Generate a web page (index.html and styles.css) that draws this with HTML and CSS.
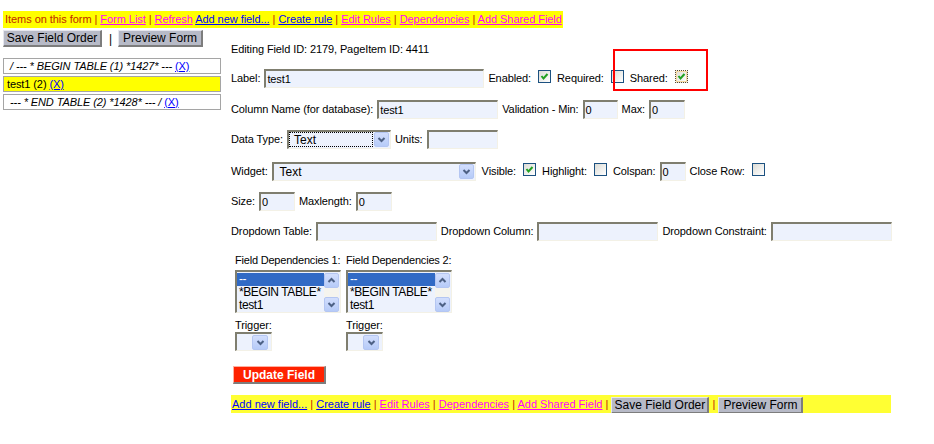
FILE: index.html
```html
<!DOCTYPE html>
<html>
<head>
<meta charset="utf-8">
<title>Edit Field</title>
<link rel="stylesheet" href="styles.css">
</head>
<body>
<div class="page">
  <div class="topbar"><span class="note">Items on this form</span> <span class="sep">|</span> <a class="lnk pink" href="#">Form List</a> <span class="sep">|</span> <a class="lnk pink" href="#">Refresh</a> <a class="lnk blue" href="#">Add new field...</a> <span class="sep">|</span> <a class="lnk blue" href="#">Create rule</a> <span class="sep">|</span> <a class="lnk pink" href="#">Edit Rules</a> <span class="sep">|</span> <a class="lnk pink" href="#">Dependencies</a> <span class="sep">|</span> <a class="lnk pink" href="#">Add Shared Field</a></div>
  <div class="main">
    <div class="left">
      <div class="btnrow"><span class="btn btn-save">Save Field Order</span><span class="pipe">|</span><span class="btn btn-prev">Preview Form</span></div>
      <div class="items">
        <div class="item tbl"><i>/ --- * BEGIN TABLE (1) *1427* --- </i><a class="lnk blue" href="#">(X)</a></div>
        <div class="item cur">test1 (2) <a class="lnk blue" href="#">(X)</a></div>
        <div class="item tbl"><i>--- * END TABLE (2) *1428* --- / </i><a class="lnk blue" href="#">(X)</a></div>
      </div>
    </div>
    <div class="right">
      <div class="title">Editing Field ID: 2179, PageItem ID: 4411</div>
      <div class="row r1">
        <span>Label:</span><span class="inp w220">test1</span>
        <span>Enabled:</span><span class="cb"><svg width="9" height="9" viewBox="0 0 9 9"><polyline points="1.5,4 3.5,6.5 7.5,2" fill="none" stroke="#21a121" stroke-width="2"/></svg></span>
        <span>Required:</span><span class="cb"></span>
        <span>Shared:</span><span class="cb focus"><svg width="9" height="9" viewBox="0 0 9 9"><polyline points="1.5,4 3.5,6.5 7.5,2" fill="none" stroke="#21a121" stroke-width="2"/></svg></span>
      </div>
      <div class="row r2">
        <span>Column Name (for database):</span><span class="inp w121">test1</span>
        <span>Validation - Min:</span><span class="inp w35">0</span>
        <span>Max:</span><span class="inp w36">0</span>
      </div>
      <div class="row r3">
        <span>Data Type:</span>
        <span class="sel w104"><span class="sel-txt focus">Text</span><span class="arrow"><svg width="13" height="13" viewBox="0 0 13 13"><polyline points="3.5,5 6.5,8 9.5,5" fill="none" stroke="#4d6185" stroke-width="2"/></svg></span></span>
        <span>Units:</span><span class="inp w71"></span>
      </div>
      <div class="row r4">
        <span>Widget:</span>
        <span class="sel w204"><span class="sel-txt">Text</span><span class="arrow"><svg width="13" height="13" viewBox="0 0 13 13"><polyline points="3.5,5 6.5,8 9.5,5" fill="none" stroke="#4d6185" stroke-width="2"/></svg></span></span>
        <span class="gap2">Visible:</span><span class="cb"><svg width="9" height="9" viewBox="0 0 9 9"><polyline points="1.5,4 3.5,6.5 7.5,2" fill="none" stroke="#21a121" stroke-width="2"/></svg></span>
        <span>Highlight:</span><span class="cb"></span>
        <span>Colspan:</span><span class="inp w26">0</span>
        <span>Close Row:</span><span class="cb"></span>
      </div>
      <div class="row r5">
        <span>Size:</span><span class="inp w36">0</span>
        <span>Maxlength:</span><span class="inp w36">0</span>
      </div>
      <div class="row r6">
        <span>Dropdown Table:</span><span class="inp w121"></span>
        <span>Dropdown Column:</span><span class="inp w121"></span>
        <span>Dropdown Constraint:</span><span class="inp w121"></span>
      </div>
      <div class="deps">
        <div class="dep">
          <div class="dep-lbl">Field Dependencies 1:</div>
          <div class="lbox">
            <div class="opts"><div class="opt on">--</div><div class="opt">*BEGIN TABLE*</div><div class="opt">test1</div></div>
            <div class="sb">
              <span class="sb-btn"><svg width="13" height="13" viewBox="0 0 13 13"><polyline points="3.5,8 6.5,5 9.5,8" fill="none" stroke="#4d6185" stroke-width="2"/></svg></span>
              <span class="sb-track"></span>
              <span class="sb-btn"><svg width="13" height="13" viewBox="0 0 13 13"><polyline points="3.5,5 6.5,8 9.5,5" fill="none" stroke="#4d6185" stroke-width="2"/></svg></span>
            </div>
          </div>
          <div class="trig-lbl">Trigger:</div>
          <span class="sel w37"><span class="sel-txt"></span><span class="arrow"><svg width="13" height="13" viewBox="0 0 13 13"><polyline points="3.5,5 6.5,8 9.5,5" fill="none" stroke="#4d6185" stroke-width="2"/></svg></span></span>
        </div>
        <div class="dep">
          <div class="dep-lbl">Field Dependencies 2:</div>
          <div class="lbox">
            <div class="opts"><div class="opt on">--</div><div class="opt">*BEGIN TABLE*</div><div class="opt">test1</div></div>
            <div class="sb">
              <span class="sb-btn"><svg width="13" height="13" viewBox="0 0 13 13"><polyline points="3.5,8 6.5,5 9.5,8" fill="none" stroke="#4d6185" stroke-width="2"/></svg></span>
              <span class="sb-track"></span>
              <span class="sb-btn"><svg width="13" height="13" viewBox="0 0 13 13"><polyline points="3.5,5 6.5,8 9.5,5" fill="none" stroke="#4d6185" stroke-width="2"/></svg></span>
            </div>
          </div>
          <div class="trig-lbl">Trigger:</div>
          <span class="sel w37"><span class="sel-txt"></span><span class="arrow"><svg width="13" height="13" viewBox="0 0 13 13"><polyline points="3.5,5 6.5,8 9.5,5" fill="none" stroke="#4d6185" stroke-width="2"/></svg></span></span>
        </div>
      </div>
      <div class="update">Update Field</div>
      <div class="botbar"><a class="lnk blue" href="#">Add new field...</a> <span class="sep">|</span> <a class="lnk blue" href="#">Create rule</a> <span class="sep">|</span> <a class="lnk pink" href="#">Edit Rules</a> <span class="sep">|</span> <a class="lnk pink" href="#">Dependencies</a> <span class="sep">|</span> <a class="lnk pink" href="#">Add Shared Field</a> <span class="sep">|</span> <span class="btn btn-save2">Save Field Order</span> <span class="sep">|</span> <span class="btn btn-prev">Preview Form</span></div>
    </div>
  </div>
  <div class="annot"></div>
</div>
</body>
</html>
```
FILE: styles.css
```css
* { box-sizing: border-box; }
html, body { margin: 0; padding: 0; background: #fff; }
body { font-family: "Liberation Sans", Arial, sans-serif; font-size: 11px; line-height: 14px; color: #000; }

.page { position: relative; padding: 11px 0 0 3px; }

.topbar { display: inline-block; height: 17px; line-height: 17px; background: #ffff00; padding: 0 1px 0 2px; white-space: pre; letter-spacing: -0.05px; }
.note, .sep { color: #c02800; }
.lnk { text-decoration: underline; }
.blue { color: #0000ff; }
.pink { color: #ff00ff; }

.main { display: flex; margin-top: 2px; }
.left { width: 218px; flex: none; }
.btnrow { display: flex; align-items: center; height: 17px; }
.btn { display: inline-flex; align-items: center; justify-content: center; height: 17px; background: #b7bac7; border-style: solid; border-width: 1px 2px 2px 1px; border-color: #e6e7ee #7d7d7d #7d7d7d #e6e7ee; font-size: 12px; letter-spacing: 0; color: #000; white-space: nowrap; vertical-align: middle; }
.btn-save { width: 99px; }
.btn-save2 { width: 98px; }
.btn-prev { width: 85px; }
.pipe { margin: 0 6px 0 7px; font-size: 12px; }

.items { margin-top: 11px; }
.item { height: 16px; border: 1px solid #a5a5a5; margin-bottom: 2px; line-height: 14px; padding-left: 3px; white-space: pre; letter-spacing: -0.1px; }
.item.tbl { padding-left: 6px; }
.item.cur { background: #ffff00; }

.right { margin-left: 10px; width: 660px; flex: none; padding-top: 12px; letter-spacing: -0.1px; }
.title { height: 14px; line-height: 14px; }

.row { display: flex; align-items: center; gap: 4px; height: 20px; white-space: nowrap; }
.r1 { margin-top: 12px; }
.r2 { margin-top: 11px; }
.r3 { margin-top: 10px; }
.r4 { margin-top: 12px; }
.r5 { margin-top: 10px; }
.r6 { margin-top: 10px; }

.inp { display: block; flex: none; height: 19px; line-height: 16px; background: #edf2fd; border-style: solid; border-width: 2px 1px 1px 2px; border-color: #7f7e6f #f3f1e6 #f3f1e6 #7f7e6f; padding-left: 1px; font-size: 11px; }
.w220 { width: 220px; }
.w121 { width: 121px; }
.w71 { width: 71px; }
.w36 { width: 36px; }
.w35 { width: 35px; }
.w26 { width: 26px; }

.cb { flex: none; width: 13px; height: 13px; border: 1px solid #1c5180; background: linear-gradient(135deg, #dcdcd6, #ffffff); margin: 0 2px 3px 3px; display: flex; align-items: center; justify-content: center; }
.cb.focus { border: 1px dotted #5a4a30; box-shadow: inset 0 0 0 1px #f6d9a0; }
.gap2 { margin-left: 2px; }

.sel { display: flex; flex: none; align-items: center; height: 19px; background: #edf2fd; border-style: solid; border-width: 2px 1px 1px 2px; border-color: #7f7e6f #f3f1e6 #f3f1e6 #7f7e6f; padding-right: 1px; }
.w104 { width: 104px; }
.w204 { width: 204px; }
.w37 { width: 37px; }
.sel-txt { flex: 1; height: 15px; line-height: 14px; padding-left: 5px; font-size: 12px; letter-spacing: 0; border: 1px solid transparent; }
.sel-txt.focus { border: 1px dotted #000; padding-left: 4px; margin-right: 1px; }
.arrow { flex: none; width: 15px; height: 15px; border: 1px solid #b4c6f2; border-radius: 2px; background: linear-gradient(180deg, #d2defd, #b6cbf8); display: flex; align-items: center; justify-content: center; }
.w37 .arrow { width: 16px; margin-right: 2px; }

.deps { display: flex; margin-top: 12px; padding-left: 4px; }
.dep { width: 111px; flex: none; }
.dep-lbl { height: 14px; line-height: 14px; white-space: nowrap; letter-spacing: -0.2px; }
.lbox { display: flex; margin-top: 3px; width: 106px; height: 43px; background: #edf2fd; border-style: solid; border-width: 2px 1px 1px 2px; border-color: #7f7e6f #f3f1e6 #f3f1e6 #7f7e6f; padding-right: 1px; }
.opts { flex: 1; padding-top: 1px; }
.opt { height: 13px; line-height: 13px; font-size: 12px; letter-spacing: -0.4px; padding-left: 2px; white-space: nowrap; }
.opt.on { background: #316ac5; color: #fff; }
.sb { flex: none; width: 15px; margin-top: 1px; height: 39px; display: flex; flex-direction: column; background: #f5f4ee; }
.sb-btn { flex: none; width: 15px; height: 15px; border: 1px solid #b4c6f2; border-radius: 2px; background: linear-gradient(180deg, #d2defd, #b6cbf8); display: flex; align-items: center; justify-content: center; }
.sb-track { flex: 1; }
.trig-lbl { margin-top: 6px; height: 13px; line-height: 13px; }

.update { margin: 15px 0 0 2px; width: 93px; height: 18px; background: #ff2200; color: #fff; font-weight: bold; font-size: 12px; letter-spacing: 0; display: flex; align-items: center; justify-content: center; border-style: solid; border-width: 1px 2px 2px 1px; border-color: #ffb0a0 #7d7d7d #7d7d7d #ffb0a0; }

.botbar { margin-top: 11px; height: 18px; line-height: 18px; background: #ffff33; padding-left: 1px; white-space: pre; letter-spacing: 0; }

.annot { position: absolute; left: 613px; top: 49px; width: 95px; height: 42px; border: 2px solid #ff0000; }
```
